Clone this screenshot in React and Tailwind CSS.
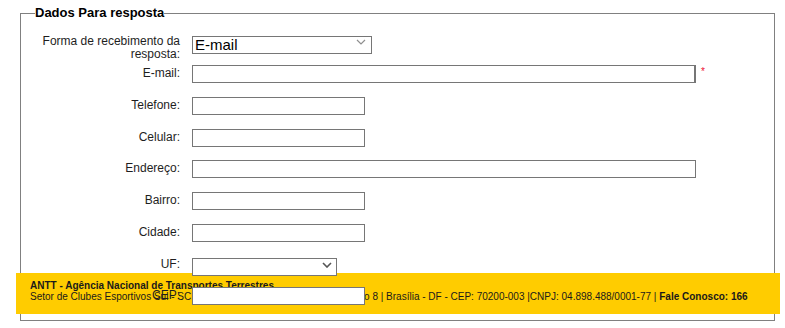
const Chevron = ({ className, stroke, width }) => (
  <svg
    className={className}
    width="10"
    height="6"
    viewBox="0 0 10 6"
    fill="none"
    stroke={stroke}
    strokeWidth={width}
  >
    <polyline points="1,1 5,5 9,1" />
  </svg>
);

function Field({ label, children }) {
  return (
    <div className="flex h-[31.75px] items-start">
      <label className="relative z-20 w-[159px] shrink-0 pt-[2px] text-right text-[12px] leading-[13px] text-[#1e1e1e]">
        {label}
      </label>
      <div className="relative z-20 ml-[12px] flex items-start">{children}</div>
    </div>
  );
}

const inputClass = "h-[18px] border border-[#767676] bg-white px-[2px] text-[13px] outline-none";

export default function App() {
  return (
    <div className="relative h-[328px] w-[785px] overflow-hidden bg-white font-['Liberation_Sans',Arial,sans-serif] text-[#1e1e1e]">
      <div className="pl-[20px] pt-[5px]">
        <fieldset className="m-0 h-[316px] w-[755px] border border-[#808080] p-0">
          <legend className="ml-[14px] px-0 text-[13px] font-bold leading-[16px] text-black">
            Dados Para resposta
          </legend>
          <div className="pt-[12.25px]">
            <Field label="Forma de recebimento da resposta:">
              <div className="relative">
                <select
                  defaultValue="email"
                  className="h-[18px] w-[180px] appearance-none border border-[#767676] bg-white pb-[2px] pl-[2px] text-[15px] leading-[15px] text-black outline-none"
                >
                  <option value="email">E-mail</option>
                  <option value="carta">Carta</option>
                  <option value="telefone">Telefone</option>
                </select>
                <Chevron
                  className="pointer-events-none absolute right-[6px] top-[6px]"
                  stroke="#8f8f8f"
                  width="1.2"
                />
              </div>
            </Field>
            <Field label="E-mail:">
              <input className={`${inputClass} w-[504px] border-r-2`} />
              <span className="ml-[5px] mt-[1px] text-[10px] leading-[12px] text-[#ee1133]">*</span>
            </Field>
            <Field label="Telefone:">
              <input className={`${inputClass} w-[173px]`} />
            </Field>
            <Field label="Celular:">
              <input className={`${inputClass} w-[173px]`} />
            </Field>
            <Field label="Endereço:">
              <input className={`${inputClass} w-[504px]`} />
            </Field>
            <Field label="Bairro:">
              <input className={`${inputClass} w-[173px]`} />
            </Field>
            <Field label="Cidade:">
              <input className={`${inputClass} w-[173px]`} />
            </Field>
            <Field label="UF:">
              <div className="relative">
                <select
                  defaultValue=""
                  className="h-[18px] w-[145px] appearance-none border border-[#767676] bg-white pl-[2px] text-[13px] outline-none"
                >
                  <option value=""></option>
                  <option value="DF">DF</option>
                  <option value="GO">GO</option>
                </select>
                <Chevron
                  className="pointer-events-none absolute right-[5px] top-[6px]"
                  stroke="#555555"
                  width="1.6"
                />
              </div>
            </Field>
            <Field label="CEP:">
              <input className={`${inputClass} w-[173px]`} />
            </Field>
          </div>
        </fieldset>
      </div>

      <footer className="absolute bottom-[14px] left-[16px] z-10 h-[41px] w-[764px] bg-[#ffcc00] pl-[14px] pt-[7px] text-[10px] leading-[11px] text-[#1a1a1a]">
        <p className="font-bold">ANTT - Agência Nacional de Transportes Terrestres</p>
        <p>
          Setor de Clubes Esportivos Sul - SCES, Trecho 3, Lote 10, Projeto Orla Polo 8 | Brasília - DF - CEP:
          70200-003 |CNPJ: 04.898.488/0001-77 | <span className="font-bold">Fale Conosco: 166</span>
        </p>
      </footer>
    </div>
  );
}
